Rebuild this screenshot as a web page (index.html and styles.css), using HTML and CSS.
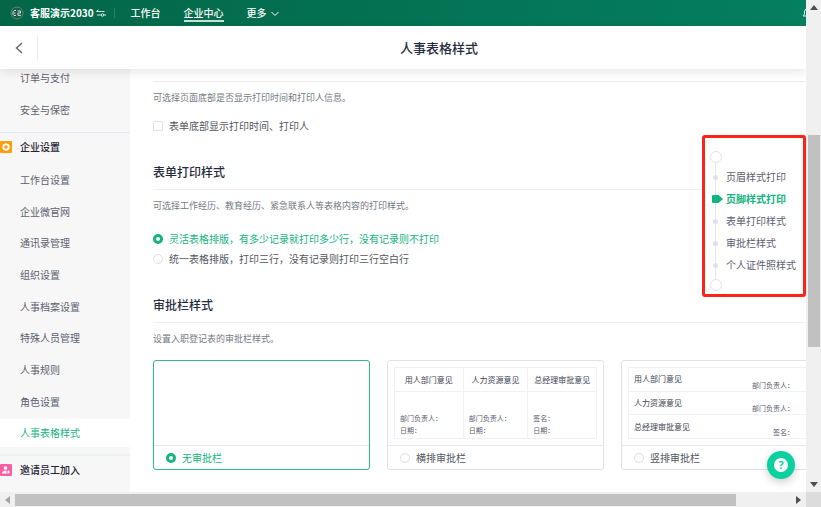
FILE: index.html
```html
<!DOCTYPE html>
<html lang="zh-CN">
<head>
    <meta charset="UTF-8">
    <meta name="viewport" content="width=device-width, initial-scale=1.0">
    <title>人事表格样式</title>
    <link rel="stylesheet" href="styles.css">
</head>
<body>
    <div class="window">
        <div class="page">
            <header class="topbar">
                <svg class="logo" viewBox="0 0 14 14">
                    <circle cx="7" cy="7" r="6" fill="#1d5a48" stroke="#4d8f78" />
                    <path d="M6 4.5H4.2L3 5.8v2.6l1 1.1h2M7.5 5h3v2H8v2.300h3M4.800 6.500v1.500" fill="none" stroke="#d5e8e0" />
                </svg>
                <span class="company">客服演示2030</span>
                <svg class="switch" viewBox="0 0 10 10" fill="none" stroke="#d5ebe3">
                    <path d="M0.500 3.500h5M0.500 3.500l2-2M5.500 3.500h3M1 7h4M8 7h2" />
                    <circle cx="6.500" cy="7" r="1.300" />
                </svg>
                <nav class="topnav">
                    <a href="#">工作台</a>
                    <a href="#" class="current">企业中心</a>
                    <a href="#" class="more">更多
                        <svg viewBox="0 0 8 6"><path d="M0.500 1L4 4.500L7.500 1" fill="none" stroke="#fff" /></svg>
                    </a>
                </nav>
                <svg class="bell" viewBox="0 0 4 10"><path d="M4 1L2.500 3v3L1 8h3" fill="none" stroke="#e5f2ee" /></svg>
            </header>

            <div class="titlebar">
                <button class="back" aria-label="返回">
                    <svg viewBox="0 0 8 12"><path d="M7 1L1.500 6L7 11" fill="none" stroke="#656b78" stroke-width="1.500" /></svg>
                </button>
                <h1>人事表格样式</h1>
            </div>

            <div class="content">
                <aside class="sidebar">
                    <ul class="menu scrolled">
                        <li><a href="#">订单与支付</a></li>
                        <li><a href="#">安全与保密</a></li>
                    </ul>
                    <h2 class="menu-title">
                        <svg viewBox="0 0 12 12">
                            <rect width="12" height="12" rx="1" fill="#ff9c0c" />
                            <path d="M6 2.500l3 1.500v4L6 9.500L3 8V4z" fill="#fff" stroke="#fff" stroke-linejoin="round" />
                            <circle cx="6" cy="6" r="1.700" fill="#ff9c0c" />
                        </svg>
                        企业设置
                    </h2>
                    <ul class="menu fill">
                        <li><a href="#">工作台设置</a></li>
                        <li><a href="#">企业微官网</a></li>
                        <li><a href="#">通讯录管理</a></li>
                        <li><a href="#">组织设置</a></li>
                        <li><a href="#">人事档案设置</a></li>
                        <li><a href="#">特殊人员管理</a></li>
                        <li><a href="#">人事规则</a></li>
                        <li><a href="#">角色设置</a></li>
                        <li><a href="#" class="active">人事表格样式</a></li>
                    </ul>
                    <h2 class="menu-title last">
                        <svg viewBox="0 0 12 12">
                            <rect width="12" height="12" rx="1" fill="#fa5fa6" />
                            <circle cx="5.500" cy="4" r="1.800" fill="#fff" />
                            <path d="M2 9.500c0-4 7-4 7 0z" fill="#fff" />
                            <path d="M8.500 6v4M6.500 8h4" stroke="#fa5fa6" stroke-width="2" />
                            <path d="M8.500 6.500v3M7 8h3" stroke="#fff" />
                        </svg>
                        邀请员工加入
                    </h2>
                </aside>

                <main class="main">
                    <section class="section first">
                        <p class="desc">可选择页面底部是否显示打印时间和打印人信息。</p>
                        <div class="choices">
                            <label class="choice"><input type="checkbox"> 表单底部显示打印时间、打印人</label>
                        </div>
                    </section>

                    <section class="section">
                        <h2>表单打印样式</h2>
                        <p class="desc">可选择工作经历、教育经历、紧急联系人等表格内容的打印样式。</p>
                        <div class="choices radios">
                            <label class="choice"><input type="radio" name="layout" checked> <span>灵活表格排版，有多少记录就打印多少行，没有记录则不打印</span></label>
                            <label class="choice"><input type="radio" name="layout"> <span>统一表格排版，打印三行，没有记录则打印三行空白行</span></label>
                        </div>
                    </section>

                    <section class="section">
                        <h2>审批栏样式</h2>
                        <p class="desc">设置入职登记表的审批栏样式。</p>
                        <div class="cards">
                            <div class="card selected">
                                <div class="preview"></div>
                                <label class="choice"><input type="radio" name="approval" checked> <span>无审批栏</span></label>
                            </div>
                            <div class="card">
                                <div class="preview">
                                    <table class="horizontal">
                                        <tr><th>用人部门意见</th><th>人力资源意见</th><th>总经理审批意见</th></tr>
                                        <tr><td>部门负责人：<br>日期：</td><td>部门负责人：<br>日期：</td><td>签名：<br>日期：</td></tr>
                                    </table>
                                </div>
                                <label class="choice"><input type="radio" name="approval"> <span>横排审批栏</span></label>
                            </div>
                            <div class="card">
                                <div class="preview">
                                    <table class="vertical">
                                        <tr><th>用人部门意见</th><td>部门负责人：</td></tr>
                                        <tr><th>人力资源意见</th><td>部门负责人：</td></tr>
                                        <tr><th>总经理审批意见</th><td>签名：</td></tr>
                                    </table>
                                </div>
                                <label class="choice"><input type="radio" name="approval"> <span>竖排审批栏</span></label>
                            </div>
                        </div>
                    </section>
                </main>
            </div>

            <nav class="anchors">
                <ul>
                    <li><a href="#">页眉样式打印</a></li>
                    <li class="active"><a href="#">页脚样式打印</a></li>
                    <li><a href="#">表单打印样式</a></li>
                    <li><a href="#">审批栏样式</a></li>
                    <li><a href="#">个人证件照样式</a></li>
                </ul>
            </nav>

            <button class="help" aria-label="帮助"><span>?</span></button>
        </div>

        <div class="scroll vertical-scroll">
            <svg viewBox="0 0 8 5"><path d="M0 5L4 0L8 5z" fill="#505050" /></svg>
            <div class="track">
                <div class="before"></div>
                <div class="thumb"></div>
                <div class="after"></div>
            </div>
            <svg viewBox="0 0 8 5"><path d="M0 0L4 5L8 0z" fill="#505050" /></svg>
        </div>
        <div class="scroll horizontal-scroll">
            <svg viewBox="0 0 5 8"><path d="M5 0L0 4L5 8z" fill="#a3a3a3" /></svg>
            <div class="track">
                <div class="thumb"></div>
                <div class="after"></div>
            </div>
            <svg viewBox="0 0 5 8"><path d="M0 0L5 4L0 8z" fill="#505050" /></svg>
        </div>
        <div class="corner"></div>
    </div>
</body>
</html>
```
FILE: styles.css
```css
* {
    box-sizing: border-box;
}

body {
    margin: 0;
    font-family: "Noto Sans CJK SC", sans-serif;
    font-size: 10px;
    line-height: 16px;
    color: #5c6070;
    background: #fff;
}

h1, h2, p, ul {
    margin: 0;
    padding: 0;
}

ul {
    list-style: none;
}

a {
    color: inherit;
    text-decoration: none;
}

button {
    border: none;
    padding: 0;
    background: none;
    cursor: pointer;
}

.window {
    display: grid;
    grid-template-columns: minmax(0, 1fr) 15px;
    grid-template-rows: minmax(0, 1fr) 15px;
    height: 100vh;
}

.page {
    position: relative;
    display: flex;
    flex-direction: column;
    overflow: hidden;
}

/* Top bar */
.topbar {
    display: flex;
    align-items: center;
    flex: none;
    height: 26px;
    padding-left: 10px;
    background: linear-gradient(90deg, #036647, #047f5f);
    color: #fff;
    font-weight: 500;
}

.logo {
    width: 14px;
    height: 14px;
    margin-right: 6px;
}

.company {
    font-weight: 700;
}

.switch {
    width: 10px;
    height: 10px;
    margin-left: 2px;
}

.topnav {
    display: flex;
    gap: 23px;
    margin-left: 8px;
    padding-left: 17px;
    position: relative;
}

.topnav::before {
    content: "";
    position: absolute;
    left: 0;
    top: 4px;
    height: 10px;
    border-left: 1px solid #2c7e65;
}

.topnav a {
    height: 18px;
    line-height: 18px;
    border-bottom: 2px solid transparent;
}

.topnav a.current {
    border-bottom-color: #c8e2d9;
}

.more svg {
    width: 8px;
    height: 6px;
    margin-left: 2px;
}

.bell {
    width: 4px;
    height: 10px;
    margin-left: auto;
}

/* Title bar */
.titlebar {
    display: flex;
    align-items: center;
    flex: none;
    height: 43px;
    position: relative;
    z-index: 1;
    background: #fff;
    box-shadow: 0 3px 10px rgba(0, 0, 0, 0.1);
}

.back {
    width: 38px;
    height: 24px;
    border-right: 1px solid #eceef0;
}

.back svg {
    width: 8px;
    height: 12px;
    vertical-align: middle;
}

.titlebar h1 {
    flex: 1;
    padding-left: 34px;
    text-align: center;
    font-size: 13px;
    line-height: 20px;
    font-weight: 500;
    color: #262b3e;
}

.content {
    display: flex;
    flex: 1;
    min-height: 0;
}

/* Sidebar */
.sidebar {
    display: flex;
    flex-direction: column;
    flex: none;
    width: 130px;
    background: #f7f7f7;
    overflow: hidden;
}

.menu li {
    display: flex;
    align-items: center;
    height: 32px;
}

.menu a {
    flex: 1;
    padding-left: 20px;
    line-height: 28px;
}

.menu a.active {
    background: #fff;
    color: #15b37e;
}

.menu.scrolled {
    margin-top: -7px;
    padding-bottom: 6px;
}

.menu.fill {
    display: flex;
    flex-direction: column;
    flex: 1;
}

.menu.fill li {
    flex: 1;
}

.menu-title {
    display: flex;
    align-items: center;
    gap: 8px;
    height: 32px;
    padding-bottom: 4px;
    border-top: 1px solid #e6e9ef;
    font-size: 10px;
    font-weight: 500;
    color: #1f2436;
}

.menu-title svg {
    width: 12px;
    height: 12px;
}

.menu-title.last {
    height: 38px;
    margin-top: 5px;
    padding-bottom: 8px;
    border-top: 2px solid #eceff3;
}

/* Main column */
.main {
    flex: 1;
    min-width: 0;
    padding: 12px 0 0 23px;
    overflow: hidden;
}

.section {
    margin-bottom: 26px;
}

.section.first {
    border-top: 1px solid #ececee;
}

.section h2 {
    padding-bottom: 7px;
    border-bottom: 1px solid #f0f0f2;
    font-size: 12px;
    line-height: 20px;
    font-weight: 500;
    color: #262b3e;
}

.desc {
    padding-top: 8px;
    font-size: 9px;
    color: #747986;
}

.choices {
    margin-top: 10px;
}

.choices.radios {
    margin-top: 15px;
}

.choice {
    display: flex;
    align-items: center;
    gap: 6px;
    height: 20px;
    color: #54575f;
}

.choice input {
    appearance: none;
    flex: none;
    width: 10px;
    height: 10px;
    margin: 0;
    border: 1px solid #dcdfe6;
    border-radius: 1px;
    background: #fff;
}

.choice input[type="radio"] {
    border-radius: 50%;
}

.choice input[type="radio"]:checked {
    border: 3px solid #15b37e;
}

.choice input:checked + span {
    color: #15b37e;
}

/* Approval cards */
.cards {
    display: flex;
    gap: 17px;
    margin-top: 13px;
}

.card {
    flex: none;
    width: 217px;
    border: 1px solid #dfe2e8;
    border-radius: 3px;
}

.card.selected {
    border-color: #2eb98a;
}

.preview {
    height: 84px;
    padding: 6px;
}

.card .choice {
    height: 24px;
    padding-left: 12px;
    border-top: 1px solid #e4e8ee;
}

.preview table {
    width: 100%;
    height: 72px;
    border-collapse: collapse;
    border: 1px solid #f0f2f5;
}

.preview th {
    padding: 0;
    font-size: 8px;
    line-height: 12px;
    font-weight: 400;
    color: #3d4353;
}

.preview td {
    padding: 0;
    font-size: 7px;
    line-height: 12px;
    color: #5c6070;
}

.horizontal {
    table-layout: fixed;
}

.horizontal th {
    height: 24px;
    border: 1px solid #f0f2f5;
}

.horizontal th:first-child {
    width: 34%;
}

.horizontal th:nth-child(2) {
    width: 32%;
}

.horizontal td {
    padding: 0 0 2px 5px;
    border: 1px solid #f0f2f5;
    vertical-align: bottom;
}

.vertical tr {
    border-bottom: 1px solid #f0f2f5;
}

.vertical th {
    padding-left: 5px;
    text-align: left;
}

.vertical td {
    padding-right: 36px;
    text-align: right;
    vertical-align: bottom;
}

/* Floating section index */
.anchors {
    position: absolute;
    right: 0;
    top: 135px;
    z-index: 2;
    width: 104px;
    padding: 13px 0 3px 6px;
    border: 3px solid #fb2416;
    border-radius: 3px;
    background: #fff;
}

.anchors ul {
    position: relative;
    padding: 15px 0;
    background: linear-gradient(#e4e8ee, #e4e8ee) 4px 0 / 1px 100% no-repeat;
}

.anchors ul::before,
.anchors ul::after {
    content: "";
    position: absolute;
    left: -1px;
    width: 10px;
    height: 10px;
    border: 1px solid #dfe3ea;
    border-radius: 50%;
    background: #fff;
}

.anchors ul::before {
    top: 0;
}

.anchors ul::after {
    bottom: 0;
}

.anchors li {
    display: flex;
    align-items: center;
    height: 22px;
    white-space: nowrap;
}

.anchors li::before {
    content: "";
    width: 5px;
    height: 5px;
    margin: 0 8px 0 2px;
    border-radius: 50%;
    background: #dde2ea;
}

.anchors li.active {
    color: #15b37e;
    font-weight: 700;
}

.anchors li.active::before {
    width: 11px;
    height: 8px;
    margin: 0 3px 0 1px;
    border-radius: 1px;
    background: #15b37e;
    clip-path: polygon(0 0, 60% 0, 100% 50%, 60% 100%, 0 100%);
}

.help {
    position: absolute;
    right: 11px;
    bottom: 13px;
    display: flex;
    align-items: center;
    justify-content: center;
    width: 28px;
    height: 28px;
    border-radius: 50%;
    background: #0bd09f;
    box-shadow: 0 3px 8px rgba(0, 0, 0, 0.2);
}

.help span {
    width: 14px;
    height: 14px;
    border-radius: 50%;
    background: #fff;
    color: #0bd09f;
    font: 700 11px/14px "Open Sans", sans-serif;
}

/* Scroll bars */
.scroll {
    display: flex;
    align-items: center;
    background: #f0f0f0;
}

.scroll svg {
    flex: none;
}

.track {
    display: flex;
    flex: 1;
}

.thumb {
    background: #c1c1c1;
}

.vertical-scroll {
    flex-direction: column;
    padding: 5px 0;
}

.vertical-scroll svg {
    width: 8px;
    height: 5px;
}

.vertical-scroll .track {
    flex-direction: column;
    width: 12px;
    margin: 5px 0;
}

.vertical-scroll .before {
    flex: 120;
}

.vertical-scroll .thumb {
    flex: 212;
}

.vertical-scroll .after {
    flex: 130;
}

.horizontal-scroll {
    padding: 0 5px;
}

.horizontal-scroll svg {
    width: 5px;
    height: 8px;
}

.horizontal-scroll .track {
    height: 12px;
    margin: 0 5px;
}

.horizontal-scroll .thumb {
    flex: 720;
}

.horizontal-scroll .after {
    flex: 55;
}

.corner {
    background: #dcdcdc;
}
```
